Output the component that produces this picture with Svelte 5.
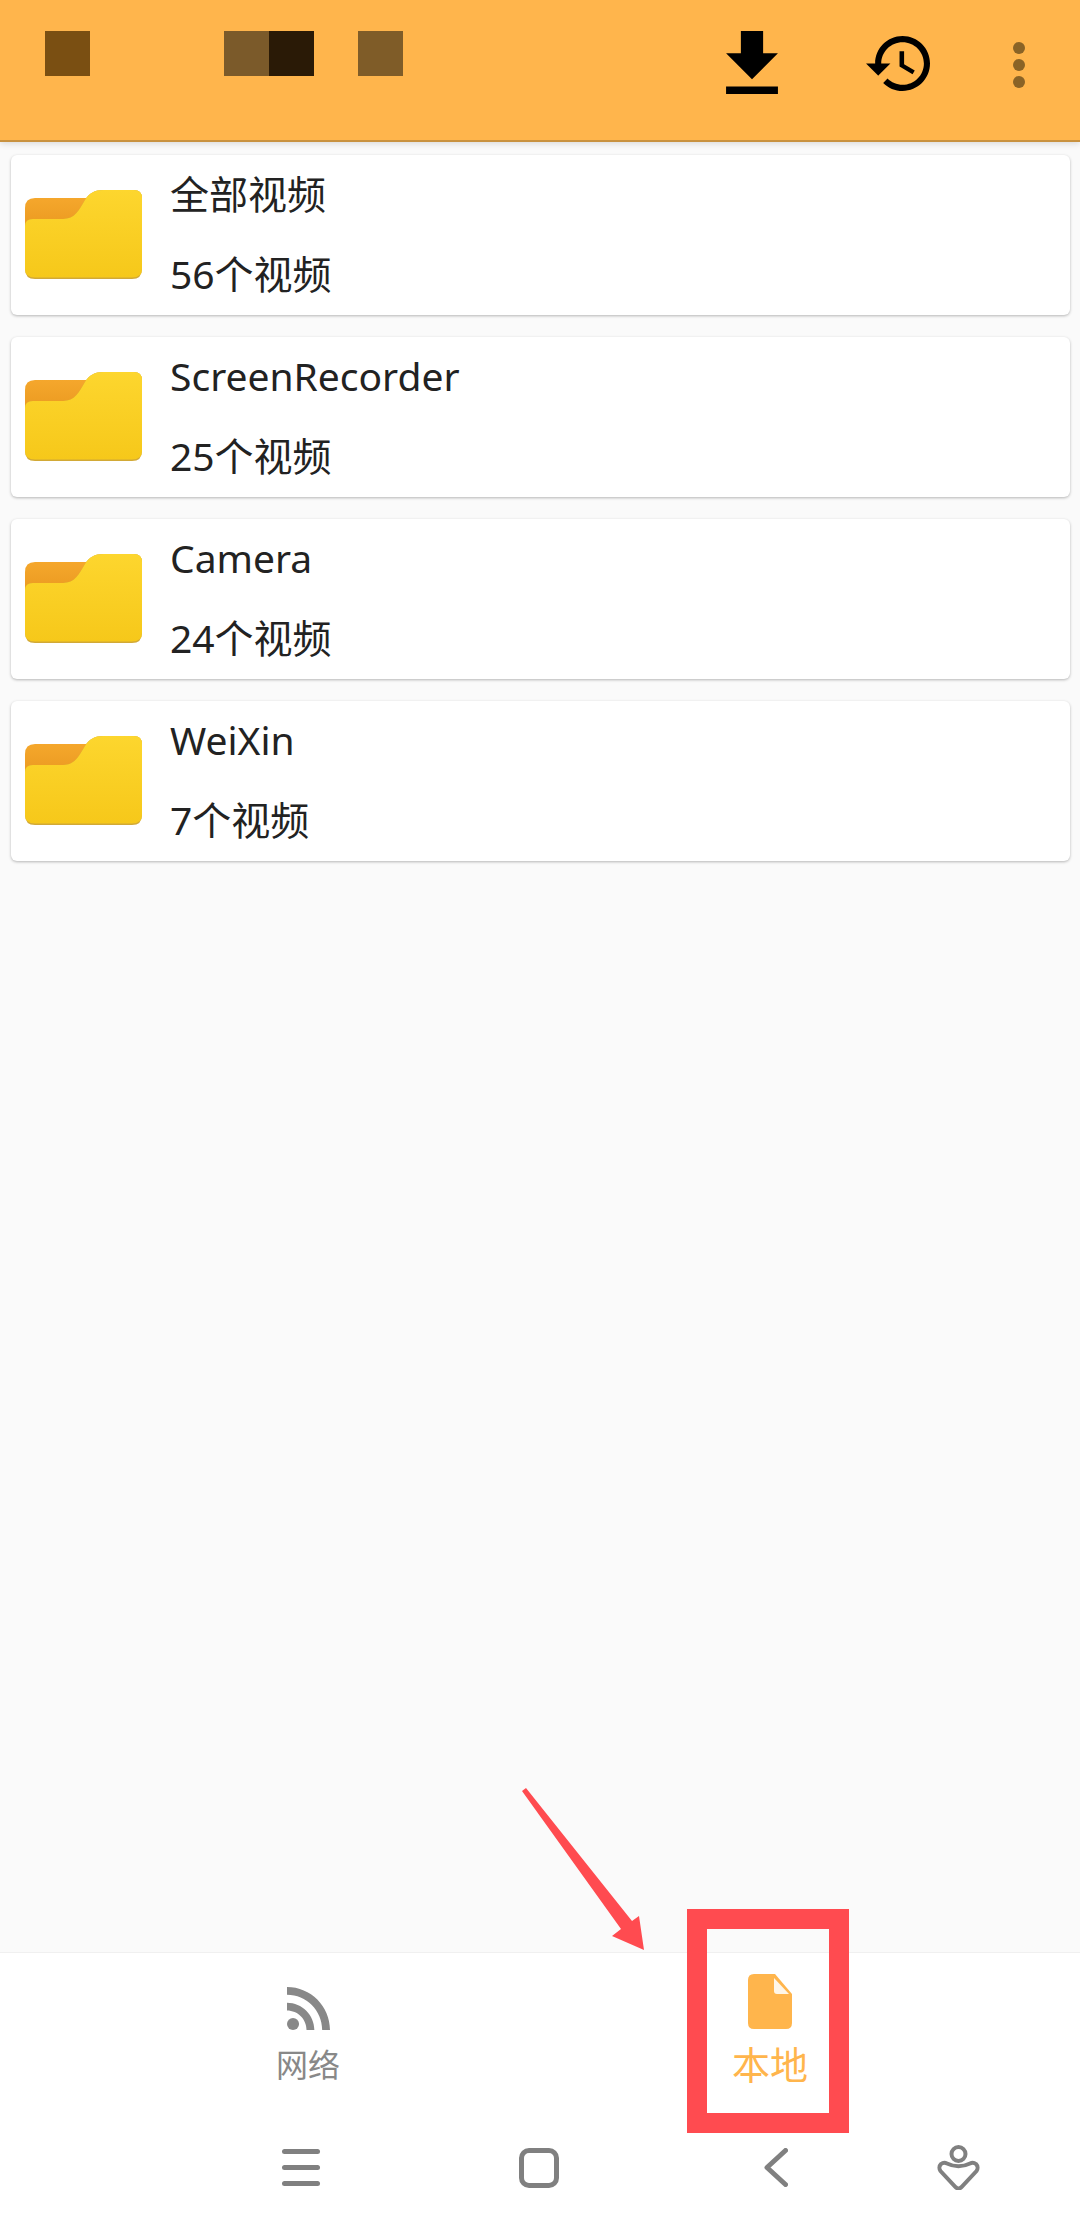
<script>
  const folders = [
    { name: '全部视频', count: '56个视频' },
    { name: 'ScreenRecorder', count: '25个视频' },
    { name: 'Camera', count: '24个视频' },
    { name: 'WeiXin', count: '7个视频' }
  ];
</script>

<div class="page">
  <header class="topbar">
    <div class="mosaic">
      <i class="sq a"></i>
      <i class="sq b"></i>
      <i class="sq c"></i>
      <i class="sq d"></i>
    </div>
    <div class="actions">
      <svg class="download" viewBox="5 3 14 17"><path d="M19 9h-4V3H9v6H5l7 7 7-7zM5 18v2h14v-2H5z" /></svg>
      <svg class="history" viewBox="1 3 21 18"><path d="M13 3c-4.97 0-9 4.03-9 9H1l3.89 3.89.07.14L9 12H6c0-3.87 3.13-7 7-7s7 3.13 7 7-3.13 7-7 7c-1.93 0-3.68-.79-4.94-2.06l-1.42 1.42C8.27 19.99 10.51 21 13 21c4.97 0 9-4.03 9-9s-4.03-9-9-9zm-1 5v5l4.28 2.54.72-1.21-3.5-2.08V8H12z" /></svg>
      <div class="dots"><i></i><i></i><i></i></div>
    </div>
  </header>

  <main class="list">
    {#each folders as f}
      <div class="card">
        <svg class="folder" viewBox="0 0 117 89">
          <defs>
            <linearGradient id="front" x1="0" y1="0" x2="0" y2="1">
              <stop offset="0" stop-color="#fdd62e" />
              <stop offset="1" stop-color="#f6c81a" />
            </linearGradient>
            <linearGradient id="tab" x1="0" y1="0" x2="0" y2="1">
              <stop offset="0" stop-color="#f5a72c" />
              <stop offset="1" stop-color="#e9981f" />
            </linearGradient>
          </defs>
          <path d="M0 18Q0 8 10 8H72V42H0Z" fill="url(#tab)" />
          <path d="M0 36Q0 29 8 29H38C50 29 54 20 60 10C64 3 70 0 78 0H109Q117 0 117 8V79Q117 89 107 89H10Q0 89 0 79Z" fill="#d2a936" />
          <path d="M0 36Q0 29 8 29H38C50 29 54 20 60 10C64 3 70 0 78 0H109Q117 0 117 8V79Q117 87.5 107 87.5H10Q0 87.5 0 79Z" fill="url(#front)" />
        </svg>
        <div class="info">
          <div class="name">{f.name}</div>
          <div class="count">{f.count}</div>
        </div>
      </div>
    {/each}
  </main>

  <nav class="tabs">
    <div class="tab">
      <svg class="rss" viewBox="4 4.44 15.56 15.56">
        <circle cx="6.18" cy="17.82" r="2.18" />
        <path d="M4 4.44v2.83c7.03 0 12.73 5.7 12.73 12.73h2.83c0-8.59-6.97-15.56-15.56-15.56zM4 10.1v2.83c3.9 0 7.07 3.17 7.07 7.07h2.83c0-5.47-4.43-9.9-9.9-9.9z" />
      </svg>
      <span>网络</span>
    </div>
    <div class="tab active">
      <svg class="file" viewBox="0 0 44 55">
        <path d="M6 0H27L44 20V49Q44 55 38 55H6Q0 55 0 49V6Q0 0 6 0Z" fill="#ffb54c" />
        <path d="M26 4V17Q26 20 29 20H41Z" fill="#fff6e8" />
      </svg>
      <span>本地</span>
    </div>
  </nav>

  <div class="sysnav">
    <div class="menu"><i></i><i></i><i></i></div>
    <div class="home"></div>
    <svg class="back" viewBox="0 0 24 39"><path d="M21.5 2.5L3 19.5L21.5 36.5" /></svg>
    <svg class="person" viewBox="0 0 43 45">
      <circle cx="21.5" cy="9" r="7" />
      <path d="M4 19C2 21 2 24 3.5 26L18.5 42Q21.5 45 24.5 42L39.5 26C41 24 41 21 39 19C37 17.5 35 17.5 33 18.5C26 22 17 22 10 18.5C8 17.5 6 17.5 4 19Z" />
    </svg>
  </div>

  <div class="highlight"></div>
  <svg class="arrow" viewBox="0 0 140 175">
    <path d="M4 5L8 2L114 135L121 130L126 164L94 150L103 143Z" />
  </svg>
</div>

<style>
  :global(body) {
    margin: 0;
    background: #fafafa;
  }

  .page {
    position: relative;
    display: flex;
    flex-direction: column;
    height: 2237px;
    overflow: hidden;
    font-family: "Noto Sans", "Noto Sans CJK SC", sans-serif;
  }

  .topbar {
    position: relative;
    display: flex;
    height: 140px;
    flex-shrink: 0;
    background: #ffb54c;
    border-bottom: 2px solid #c9923f;
    box-shadow: 0 2px 6px rgba(0, 0, 0, 0.12);
  }

  .mosaic {
    display: flex;
    padding: 31px 0 0 45px;
  }

  .sq {
    display: block;
    width: 45px;
    height: 45px;
  }

  .a { background: #7a4f12; margin-right: 134px; }
  .b { background: #7b5a2a; }
  .c { background: #2a1a06; margin-right: 44px; }
  .d { background: #7f5c28; }

  .actions {
    display: flex;
    align-items: flex-start;
    margin-left: auto;
    padding-right: 55px;
  }

  .download {
    width: 52px;
    height: 63px;
    margin-top: 31px;
    margin-right: 88px;
  }

  .history {
    width: 64px;
    height: 55px;
    margin-top: 36px;
    margin-right: 83px;
  }

  .dots {
    display: flex;
    flex-direction: column;
    gap: 5px;
    margin-top: 42px;
  }

  .dots i {
    display: block;
    width: 12px;
    height: 12px;
    border-radius: 50%;
    background: #8a6326;
  }

  .list {
    flex: 1;
    display: flex;
    flex-direction: column;
    gap: 22px;
    padding: 13px 10px 0 11px;
  }

  .card {
    display: flex;
    height: 160px;
    background: #fff;
    border-radius: 6px;
    box-shadow: 0 1px 3px rgba(0, 0, 0, 0.28);
  }

  .folder {
    width: 117px;
    height: 89px;
    margin: 35px 28px 0 14px;
    flex-shrink: 0;
  }

  .info {
    margin-top: -1px;
    color: #222;
    font-size: 39px;
    line-height: 80px;
  }

  .tabs {
    display: grid;
    grid-template-columns: 462px 462px;
    height: 181px;
    padding-left: 77px;
    background: #fff;
    border-top: 1px solid #f0f0f0;
    box-sizing: border-box;
  }

  .tab {
    display: flex;
    flex-direction: column;
    align-items: center;
    color: #888;
    font-size: 32px;
    line-height: 40px;
  }

  .tab.active {
    color: #ffb54c;
    font-size: 38px;
    line-height: 44px;
  }

  .rss {
    width: 43px;
    height: 43px;
    margin-top: 34px;
    margin-bottom: 15px;
    fill: #888;
  }

  .file {
    width: 44px;
    height: 55px;
    margin-top: 21px;
    margin-bottom: 13px;
  }

  .sysnav {
    display: grid;
    grid-template-columns: 238px 238px 238px 124px;
    justify-items: center;
    align-items: center;
    align-content: start;
    height: 104px;
    box-sizing: border-box;
    padding: 12px 0 0 182px;
    background: #fff;
  }

  .menu {
    display: flex;
    flex-direction: column;
    gap: 11px;
    width: 38px;
  }

  .menu i {
    display: block;
    height: 5px;
    border-radius: 3px;
    background: #808080;
  }

  .home {
    width: 40px;
    height: 40px;
    box-sizing: border-box;
    border: 5px solid #808080;
    border-radius: 10px;
  }

  .back {
    width: 24px;
    height: 39px;
    margin-right: 2px;
    fill: none;
    stroke: #808080;
    stroke-width: 5;
    stroke-linecap: round;
    stroke-linejoin: round;
  }

  .person {
    width: 43px;
    height: 45px;
    fill: none;
    stroke: #808080;
    stroke-width: 4;
  }

  /* annotation drawn over the screenshot */
  .highlight {
    position: absolute;
    left: 687px;
    top: 1909px;
    width: 162px;
    height: 224px;
    box-sizing: border-box;
    border: 20px solid #ff4b50;
  }

  .arrow {
    position: absolute;
    left: 518px;
    top: 1786px;
    width: 140px;
    height: 175px;
    fill: #ff4b50;
  }
</style>
